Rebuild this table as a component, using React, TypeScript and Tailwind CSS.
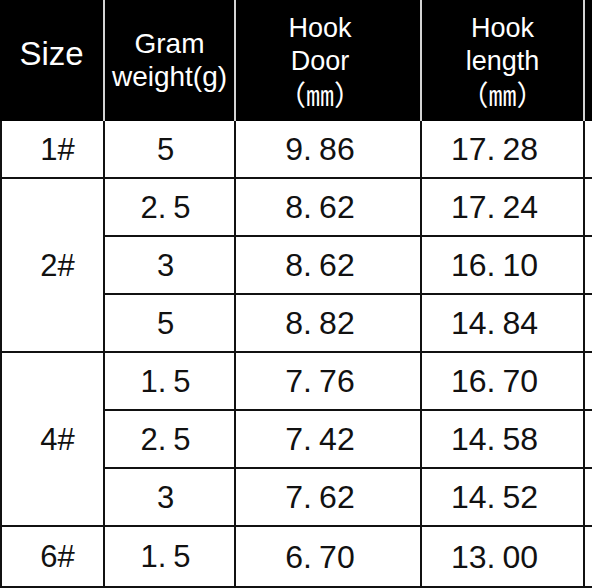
const rows: { size?: string; span?: number; last?: boolean; g: string; door: string; len: string }[] = [
  { size: "1#", span: 1, g: "5", door: "9.86", len: "17.28" },
  { size: "2#", span: 3, g: "2.5", door: "8.62", len: "17.24" },
  { g: "3", door: "8.62", len: "16.10" },
  { g: "5", door: "8.82", len: "14.84" },
  { size: "4#", span: 3, g: "1.5", door: "7.76", len: "16.70" },
  { g: "2.5", door: "7.42", len: "14.58" },
  { g: "3", door: "7.62", len: "14.52" },
  { size: "6#", span: 1, last: true, g: "1.5", door: "6.70", len: "13.00" },
];

const cell = "border-r-2 border-b-2 border-[#111] text-center align-middle p-0 font-['Liberation_Sans',Arial,sans-serif] text-[#111] leading-none";

// half-width dot, like the CJK font in the source sheet
const Num = ({ v }: { v: string }) => {
  const [a, b] = v.split(".");
  if (b === undefined) return <>{a}</>;
  return (
    <>
      {a}
      <span className="inline-block w-[0.5em] text-left">.</span>
      {b}
    </>
  );
};

const App = () => {
  return (
    <div className="w-[592px] h-[588px] overflow-hidden bg-white">
      <table className="table-fixed border-separate border-spacing-0 w-[685px]">
        <colgroup>
          <col className="w-[105px]" />
          <col className="w-[131px]" />
          <col className="w-[186px]" />
          <col className="w-[163px]" />
          <col className="w-[100px]" />
        </colgroup>
        <thead>
          <tr className="h-[121px] bg-black text-white font-['Liberation_Sans',Arial,sans-serif]">
            <th className="border-r-2 border-[#d4d4d4] font-normal text-[33px] leading-none align-middle pb-[14px]">Size</th>
            <th className="border-r-2 border-[#d4d4d4] font-normal text-[28px] leading-[33px] align-middle pb-[2px]">
              Gram
              <br />
              weight(g)
            </th>
            <th className="border-r-2 border-[#d4d4d4] font-normal text-[27px] leading-[33px] align-middle pr-[16px] pt-[4px]">
              Hook
              <br />
              Door
              <br />
              <span className="font-['Noto_Sans_CJK_SC',sans-serif] text-[28px]">（㎜）</span>
            </th>
            <th className="border-r-2 border-[#d4d4d4] font-normal text-[27px] leading-[33px] align-middle pt-[4px]">
              Hook
              <br />
              length
              <br />
              <span className="font-['Noto_Sans_CJK_SC',sans-serif] text-[28px]">（㎜）</span>
            </th>
            <th className="font-normal"></th>
          </tr>
        </thead>
        <tbody>
          {rows.map((r, i) => (
            <tr key={i} className={r.last ? "h-[61px]" : "h-[58px]"}>
              {r.size && (
                <td rowSpan={r.span} className={`${cell} border-l-2 text-[31px] pl-[10px]`}>
                  {r.size}
                </td>
              )}
              <td className={`${cell} text-[31px] pr-[8px]`}>
                <Num v={r.g} />
              </td>
              <td className={`${cell} text-[32px] pr-[16px]`}>
                <Num v={r.door} />
              </td>
              <td className={`${cell} text-[32px] pr-[16px]`}>
                <Num v={r.len} />
              </td>
              <td className={cell}></td>
            </tr>
          ))}
        </tbody>
      </table>
    </div>
  );
};

export default App;
